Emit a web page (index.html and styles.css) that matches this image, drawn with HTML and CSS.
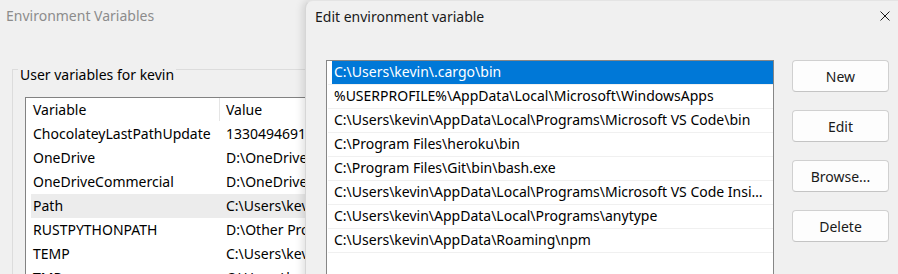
FILE: index.html
```html
<!DOCTYPE html>
<html lang="en">
<head>
    <meta charset="UTF-8">
    <title>Environment Variables</title>
    <link rel="stylesheet" href="styles.css">
</head>
<body>
    <div class="desktop">
        <!-- 后面的窗口 -->
        <div class="window back">
            <div class="titlebar inactive">Environment Variables</div>
            <div class="group">
                <span class="group-label">User variables for kevin</span>
                <div class="listview">
                    <div class="lv-row lv-head">
                        <span class="col-name">Variable</span>
                        <span class="col-value">Value</span>
                    </div>
                    <div class="lv-row"><span class="col-name">ChocolateyLastPathUpdate</span><span class="col-value">133049469100000000</span></div>
                    <div class="lv-row"><span class="col-name">OneDrive</span><span class="col-value">D:\OneDrive</span></div>
                    <div class="lv-row"><span class="col-name">OneDriveCommercial</span><span class="col-value">D:\OneDrive - Work</span></div>
                    <div class="lv-row current"><span class="col-name">Path</span><span class="col-value">C:\Users\kevin\.cargo\bin</span></div>
                    <div class="lv-row"><span class="col-name">RUSTPYTHONPATH</span><span class="col-value">D:\Other Projects\RustPython\Lib</span></div>
                    <div class="lv-row"><span class="col-name">TEMP</span><span class="col-value">C:\Users\kevin\AppData\Local\Temp</span></div>
                    <div class="lv-row"><span class="col-name">TMP</span><span class="col-value">C:\Users\kevin\AppData\Local\Temp</span></div>
                </div>
            </div>
        </div>

        <!-- 前面的对话框 -->
        <div class="window edit">
            <div class="titlebar">
                <span>Edit environment variable</span>
                <svg class="close" width="10" height="10" viewBox="0 0 10 10">
                    <path d="M0.5 0.5 L9.5 9.5 M9.5 0.5 L0.5 9.5" stroke="#1a1a1a" stroke-width="1" fill="none"/>
                </svg>
            </div>
            <div class="edit-body">
                <div class="listbox">
                    <div class="item selected"><span class="item-text">C:\Users\kevin\.cargo\bin</span></div>
                    <div class="item"><span class="item-text">%USERPROFILE%\AppData\Local\Microsoft\WindowsApps</span></div>
                    <div class="item"><span class="item-text">C:\Users\kevin\AppData\Local\Programs\Microsoft VS Code\bin</span></div>
                    <div class="item"><span class="item-text">C:\Program Files\heroku\bin</span></div>
                    <div class="item"><span class="item-text">C:\Program Files\Git\bin\bash.exe</span></div>
                    <div class="item"><span class="item-text">C:\Users\kevin\AppData\Local\Programs\Microsoft VS Code Insiders\bin</span></div>
                    <div class="item"><span class="item-text">C:\Users\kevin\AppData\Local\Programs\anytype</span></div>
                    <div class="item"><span class="item-text">C:\Users\kevin\AppData\Roaming\npm</span></div>
                </div>
                <div class="buttons">
                    <button class="btn">New</button>
                    <button class="btn">Edit</button>
                    <button class="btn">Browse...</button>
                    <button class="btn">Delete</button>
                </div>
            </div>
        </div>
    </div>
</body>
</html>
```

FILE: styles.css
```css
html, body {
    margin: 0;
    padding: 0;
}

body {
    width: 898px;
    height: 274px;
    overflow: hidden;
    background: #f0f0f0;
    font-family: 'Noto Sans', 'Open Sans', sans-serif;
    font-size: 14px;
    color: #000;
}

.desktop {
    position: relative;
    width: 100%;
    height: 100%;
    overflow: hidden;
}

.window {
    box-sizing: border-box;
    background: #f0f0f0;
}

.back {
    width: 420px;
    height: 100%;
}

.titlebar {
    display: flex;
    align-items: center;
    justify-content: space-between;
    height: 31px;
    padding: 0 8px 0 10px;
    color: #1a1a1a;
}

.titlebar.inactive {
    height: 30px;
    padding-left: 6px;
    color: #8c8c8c;
}

/* 分组框 */
.group {
    margin: 39px 0 0 12px;
    border-top: 1px solid #dcdcdc;
    border-left: 1px solid #dcdcdc;
    padding-left: 12px;
    height: 300px;
}

.group-label {
    display: block;
    width: fit-content;
    margin: -5px 0 0 -7px;
    padding: 0 2px;
    line-height: 20px;
    background: #f0f0f0;
}

.listview {
    margin-top: 12px;
    border: 1px solid #828282;
    background: #fff;
    height: 300px;
}

.lv-row {
    display: flex;
    height: 24px;
    line-height: 23px;
    margin-left: 5px;
    padding-left: 2px;
    white-space: nowrap;
}

.lv-head {
    margin-left: 0;
    padding-left: 7px;
}

.lv-head .col-name {
    width: 186px;
    border-right: 1px solid #e5e5e5;
    height: 23px;
}

.lv-head .col-value {
    padding-left: 6px;
}

.col-name {
    width: 193px;
    flex: none;
}

.col-value {
    overflow: hidden;
}

.lv-row.current {
    background: #ececec;
}

/* 编辑对话框 */
.edit {
    position: absolute;
    left: 305px;
    top: 0;
    width: 593px;
    height: 300px;
    border-left: 1px solid #d6d6d6;
    border-top: 1px solid #e4e4e4;
    border-top-left-radius: 8px;
    box-shadow: -2px 0 8px rgba(0, 0, 0, 0.14);
}

.edit .titlebar {
    padding-left: 9px;
    padding-right: 8px;
    height: 30px;
}

.close {
    display: block;
}

.edit-body {
    display: flex;
    align-items: flex-start;
    gap: 18px;
    padding: 29px 0 0 20px;
}

.listbox {
    box-sizing: border-box;
    width: 448px;
    height: 240px;
    border: 1px solid #868686;
    border-bottom: none;
    background: #fff;
    padding: 0 0 0 1px;
}

.item {
    height: 23px;
    border-bottom: 1px solid #f0f0f0;
    padding-left: 4px;
}

.item-text {
    display: block;
    height: 23px;
    line-height: 22px;
    padding-left: 2px;
    white-space: nowrap;
    overflow: hidden;
    text-overflow: ellipsis;
    padding-right: 6px;
}

.item.selected .item-text {
    background: #0078d7;
    color: #fff;
}

.buttons {
    display: flex;
    flex-direction: column;
    gap: 18px;
}

.btn {
    box-sizing: border-box;
    width: 97px;
    height: 32px;
    border: 1px solid #d0d0d0;
    border-bottom-color: #c4c4c4;
    border-radius: 4px;
    background: #fdfdfd;
    font-family: inherit;
    font-size: 14px;
    color: #1a1a1a;
    padding: 0;
}
```
